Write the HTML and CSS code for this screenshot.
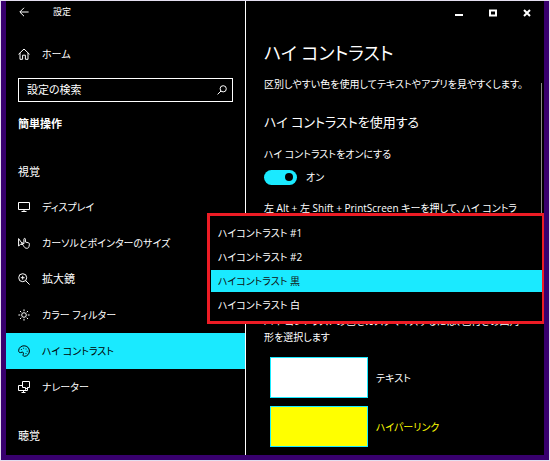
FILE: index.html
```
<!DOCTYPE html>
<html lang="ja">
<head>
    <meta charset="UTF-8">
    <meta name="viewport" content="width=device-width, initial-scale=1.0">
    <title>設定</title>
    <link rel="stylesheet" href="styles.css">
</head>
<body>
    <div class="window">
      <aside class="sidebar">
        <header class="titlebar">
          <button class="back" type="button" aria-label="戻る">
            <svg width="10" height="10" viewBox="0 0 10 10"><path d="M5 .8L.8 5L5 9.2M1 5H9.6"/></svg>
          </button>
          <span class="app-name">設定</span>
        </header>

        <a class="nav-item home" href="#home">
          <svg class="icon" viewBox="0 0 12 12"><path d="M.5 6.3L6 1L11.5 6.3M2 5V11.3H4.6V7.2H7.4V11.3H10V5"/></svg>
          ホーム
        </a>

        <form class="search">
          <input type="text" placeholder="設定の検索" aria-label="設定の検索">
          <svg width="10" height="10" viewBox="0 0 10 10"><circle cx="6.2" cy="3.8" r="3.1"/><path d="M4 6L.6 9.4"/></svg>
        </form>

        <h2 class="category">簡単操作</h2>

        <nav>
          <h3 class="group">視覚</h3>
          <a class="nav-item" href="#display">
            <svg class="icon" viewBox="0 0 12 12"><path d="M.5 1.5H11.5V8.5H.5ZM6 8.5V10.5M3.5 10.5H8.5"/></svg>
            ディスプレイ
          </a>
          <a class="nav-item" href="#cursor">
            <svg class="icon" viewBox="0 0 12 12"><path d="M.6 1.6V9L2.4 7.4H4.8ZM5.4 8.6L4 6.6C3.6 5.8 4.4 5.4 5 6L5.9 6.8V2.2C5.9 1.1 7.4 1.1 7.4 2.2V5L10.4 5.8C11.2 6 11.5 6.4 11.4 7.2L11 9.6C10.7 10.8 10 11.3 8.8 11.3C7.2 11.3 6.4 10.4 5.4 8.6"/></svg>
            カーソルとポインターのサイズ
          </a>
          <a class="nav-item kanji" href="#magnifier">
            <svg class="icon" viewBox="0 0 12 12"><circle cx="4.7" cy="4.7" r="4"/><path d="M7.6 7.6L11.6 11.6M4.7 2.8V6.6M2.8 4.7H6.6"/></svg>
            拡大鏡
          </a>
          <a class="nav-item" href="#filter">
            <svg class="icon" viewBox="0 0 12 12"><circle cx="6" cy="6" r="2.3"/><path d="M6 .4V2.2M6 9.8V11.6M.4 6H2.2M9.8 6H11.6M2 2L3.3 3.3M8.7 8.7L10 10M10 2L8.7 3.3M3.3 8.7L2 10"/></svg>
            カラー フィルター
          </a>
          <a class="nav-item active" href="#contrast" aria-current="page">
            <svg class="icon" viewBox="0 0 12 12"><path d="M.7 5.2C1 2.6 3.3.8 6.1.8C9.1.8 11.4 3 11.4 6C11.4 9 9.2 11.3 6.5 11.3C5 11.3 4.8 10.2 5.3 9.1C5.8 7.9 5.2 6.9 4 7.2L2.4 7.6C1.2 7.8.5 6.7.7 5.2Z"/><path d="M3.4 4.2V5M5.6 2.8V3.6M8 3.6V4.4M9.2 5.8V6.6M8 8V8.8"/></svg>
            ハイ コントラスト
          </a>
          <a class="nav-item" href="#narrator">
            <svg class="icon" viewBox="0 0 12 12"><path d="M4.5.5H11.5V6.5H9.5L7.5 8.5V6.5H4.5ZM4.5 4.5H.5V9.5H9.5V6.5M5.5 9.5V11.5M3.5 11.5H7.5"/></svg>
            ナレーター
          </a>
          <h3 class="group">聴覚</h3>
        </nav>
      </aside>

      <main class="content">
        <div class="controls">
          <button type="button" aria-label="最小化"><svg width="8" height="8" viewBox="0 0 8 8"><path d="M0 6H8"/></svg></button>
          <button type="button" aria-label="最大化"><svg width="8" height="8" viewBox="0 0 8 8"><path d="M1 1.5H7V6.5H1Z"/></svg></button>
          <button type="button" aria-label="閉じる"><svg width="8" height="8" viewBox="0 0 8 8"><path d="M1 1L7 7M7 1L1 7"/></svg></button>
        </div>

        <h1>ハイ コントラスト</h1>
        <p>区別しやすい色を使用してテキストやアプリを見やすくします。</p>

        <h2>ハイ コントラストを使用する</h2>
        <label class="toggle-label" for="contrast-on">ハイ コントラストをオンにする</label>
        <div class="toggle">
          <input type="checkbox" id="contrast-on" role="switch" checked>
          <span>オン</span>
        </div>
        <p class="shortcut">左 Alt + 左 Shift + PrintScreen キーを押して、ハイ コントラ</p>

        <p class="hint">ハイ コントラストの色をカスタマイズするには、色付きの四角形を選択します</p>
        <ul class="swatches">
          <li><button class="swatch text" type="button" id="sw-text"></button><label for="sw-text">テキスト</label></li>
          <li class="link-row"><button class="swatch link" type="button" id="sw-link"></button><label for="sw-link">ハイパーリンク</label></li>
          <li><button class="swatch" type="button" aria-label="色"></button></li>
        </ul>
        <div class="scrollbar"></div>
      </main>

      <!-- open theme list, lies over both columns -->
      <div class="theme-menu">
        <select size="4" aria-label="テーマ">
          <option>ハイコントラスト #1</option>
          <option>ハイコントラスト #2</option>
          <option selected>ハイコントラスト 黒</option>
          <option>ハイコントラスト 白</option>
        </select>
      </div>
    </div>
</body>
</html>
```
FILE: styles.css
```
* {
  box-sizing: border-box;
}
body {
  margin: 0;
  padding: 1px;
  height: 100vh;
  background-color: #e4def0;
  color: #fff;
  font-family: "Open Sans", "Noto Sans CJK JP", sans-serif;
  font-size: 10px;
  line-height: 16px;
  font-feature-settings: "palt";
}
h1, h2, h3, p, ul {
  margin: 0;
  padding: 0;
  font-weight: normal;
}
button {
  padding: 0;
  border: 0;
  background: none;
  color: inherit;
}
svg {
  fill: none;
  stroke: currentColor;
  stroke-width: 1;
  flex-shrink: 0;
}
.window {
  position: relative;
  display: grid;
  grid-template-columns: 240px 1fr;
  height: 100%;
  border: 5px solid #38006e;
  border-top: 0;
  background-color: #000;
  overflow: hidden;
}

/* left column */
.sidebar {
  border-right: 1px solid #fff;
  overflow: hidden;
}
.titlebar {
  display: flex;
  align-items: center;
  gap: 24px;
  height: 22px;
  padding-left: 13px;
}
.back {
  display: flex;
}
.app-name {
  font-size: 9px;
}
.nav-item {
  display: flex;
  align-items: center;
  gap: 12px;
  height: 36px;
  padding-left: 12px;
  color: #fff;
  text-decoration: none;
}
.kanji {
  font-size: 11px;
}
.icon {
  width: 12px;
  height: 12px;
}
.home {
  margin-top: 13px;
}
.search {
  display: flex;
  align-items: center;
  height: 24px;
  margin: 6px 12px 8px;
  padding: 0 5px 0 8px;
  border: 1px solid #fff;
  font-size: 11px;
}
.search input {
  flex: 1;
  min-width: 0;
  padding: 0;
  border: 0;
  outline: 0;
  background: none;
  color: #fff;
  font: inherit;
  font-feature-settings: inherit;
}
.search input::placeholder {
  color: #fff;
}
.category {
  margin-bottom: 3px;
  padding-left: 12px;
  font-size: 11px;
  font-weight: bold;
  line-height: 28px;
}
.group {
  padding: 21px 12px 7px;
  font-size: 11px;
  line-height: 20px;
}
.nav-item.active {
  background-color: #1aeaff;
  color: #000;
}

/* right column */
.content {
  position: relative;
  padding: 0 16px 0 18px;
  overflow: hidden;
}
.controls {
  display: flex;
  justify-content: flex-end;
  height: 22px;
  margin-right: -16px;
}
.controls button {
  width: 34px;
}
.controls svg {
  stroke-width: 2;
}
h1 {
  margin-top: 16px;
  font-size: 18px;
  line-height: 28px;
}
h1 + p {
  margin-top: 9px;
}
.content h2 {
  margin-top: 20px;
  font-size: 13px;
  line-height: 20px;
}
.toggle-label {
  display: block;
  margin-top: 14px;
}
.toggle {
  display: flex;
  align-items: center;
  gap: 9px;
  margin-top: 7px;
}
.toggle input {
  appearance: none;
  display: flex;
  align-items: center;
  justify-content: flex-end;
  width: 33px;
  height: 15px;
  margin: 0;
  padding-right: 4px;
  border-radius: 8px;
  background-color: #1aeaff;
}
.toggle input::before {
  content: "";
  width: 8px;
  height: 8px;
  border-radius: 50%;
  background-color: #000;
}
.shortcut {
  margin-top: 15px;
  white-space: nowrap;
}
.hint {
  margin-top: 97px;
}
.swatches {
  display: flex;
  flex-direction: column;
  gap: 8px;
  margin: 12px 0 0 6px;
  list-style: none;
}
.swatches li {
  display: flex;
  align-items: center;
  gap: 8px;
}
.swatch {
  width: 98px;
  height: 41px;
  border: 1px solid #1aeaff;
}
.text {
  background-color: #fff;
}
.link {
  background-color: #ff0;
}
.link-row {
  color: #ff0;
}
.scrollbar {
  position: absolute;
  top: 82px;
  right: 2px;
  width: 1px;
  height: 140px;
  background-color: #888;
}

.theme-menu {
  position: absolute;
  top: 212px;
  left: 201px;
  right: -1px;
  padding: 6px 0 3px 1px;
  border: 3px solid #ee1c25;
  background-color: #000;
}
.theme-menu select {
  display: block;
  width: 100%;
  height: 96px;
  padding: 0;
  border: 0;
  outline: 0;
  border-radius: 0;
  background-color: #000;
  color: #fff;
  font: inherit;
  font-feature-settings: inherit;
  overflow: hidden;
}
.theme-menu option {
  height: 22px;
  margin-bottom: 2px;
  padding: 3px 7px 0;
}
.theme-menu option:checked {
  background-image: linear-gradient(#1aeaff, #1aeaff);
}
```
